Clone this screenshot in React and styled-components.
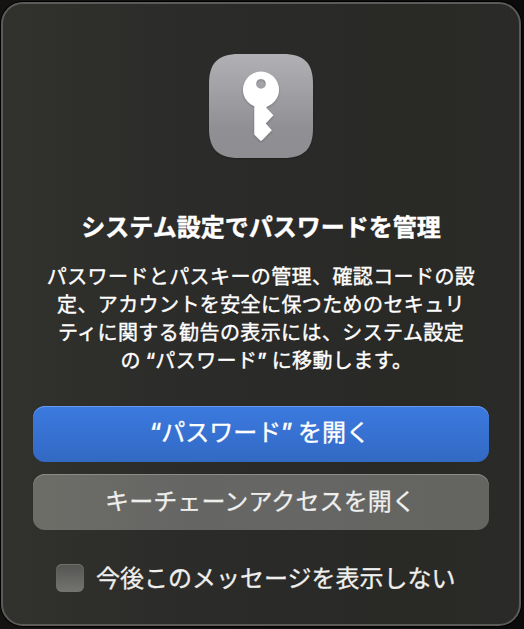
import React from "react";
import styled, { createGlobalStyle, css } from "styled-components";

const GlobalStyle = createGlobalStyle`
  html, body { margin: 0; background: #0d0b0a; overflow: hidden; }
  * { box-sizing: border-box; }
`;

const Desktop = styled.div`
  width: 524px;
  height: 629px;
  padding: 2px 3px 3px 1px;
  background: linear-gradient(90deg, #141312 0, #100e0d 50%, #0b0b0b 100%);
`;

const Dialog = styled.main`
  width: 520px;
  height: 624px;
  padding: 50px 30px 0;
  border: 2px solid #5b5b59;
  border-radius: 22px;
  box-shadow: 0 0 0 1px #000;
  background: linear-gradient(90deg, #31312d 0, #2c2c2a 30%, #2a2a29 50%, #292926 78%, #2a2a28 100%);
  display: flex;
  flex-direction: column;
  align-items: center;
  font-family: "Noto Sans CJK JP", sans-serif;
  color: #fff;
`;

const AppIcon = styled.svg`
  display: block;
  flex: none;
  width: 112px;
  height: 112px;
  margin: -4px 0 0;
`;

const Title = styled.h1`
  margin: 48px 0 0;
  height: 32px;
  font-size: 24px;
  line-height: 32px;
  font-weight: 700;
  white-space: nowrap;
  -webkit-text-stroke: 0.4px #fff;
`;

const Message = styled.p`
  margin: 20px 0 0;
  display: flex;
  flex-direction: column;
  align-items: center;
  font-size: 20px;
  line-height: 28px;
  letter-spacing: 0.4px;
  font-weight: 400;
  -webkit-text-stroke: 0.4px #fff;
`;

const Line = styled.span`
  height: 28px;
  white-space: pre;
  padding-left: ${(p) => p.$indent || 0}px;
`;

const Quote = styled.span`
  font-family: Inter, sans-serif;
  font-weight: 500;
  letter-spacing: 0;
`;

const Actions = styled.div`
  width: 456px;
  margin-top: 32px;
  display: flex;
  flex-direction: column;
  gap: 12px;
`;

const Button = styled.button`
  height: 56px;
  padding: 0 0 5px;
  border: 0;
  border-radius: 12px;
  font: 400 24px/32px "Noto Sans CJK JP", sans-serif;
  white-space: pre;
  ${(p) =>
    p.$primary
      ? css`
          color: #fff;
          background: linear-gradient(#3c7ae0, #3269c3);
          box-shadow: inset 0 1px 0 #669aeb;
          -webkit-text-stroke: 0.35px #fff;
          padding-right: 2px;
        `
      : css`
          color: #efefed;
          background: linear-gradient(90deg, #6d6d68, #656564 35%, #666665 55%, #646460);
          box-shadow: inset 0 1px 0 #8b8b88;
          -webkit-text-stroke: 0.25px #efefed;
          letter-spacing: 0.1px;
          padding-right: 1px;
        `}
`;

const Option = styled.label`
  align-self: flex-start;
  margin: 32px 0 0 23px;
  display: flex;
  align-items: center;
  gap: 12px;
  height: 32px;
  font-size: 24px;
  line-height: 32px;
  white-space: nowrap;
  color: #efefed;
  -webkit-text-stroke: 0.3px #efefed;
`;

const OptionText = styled.span`
  margin-top: -2px;
`;

const Checkbox = styled.input`
  appearance: none;
  width: 28px;
  height: 28px;
  margin: 0;
  border-radius: 6px;
  background: linear-gradient(#545452, #747471);
  box-shadow: inset 0 1px 0 #70706e, inset 0 0 1px #777;
`;

function KeyIcon() {
  return (
    <AppIcon viewBox="-4 -4 112 112" aria-hidden="true">
      <defs>
        <linearGradient id="tile" x2="0" y2="1">
          <stop stopColor="#b1b0b5" />
          <stop offset=".72" stopColor="#908f94" />
          <stop offset="1" stopColor="#8e8d92" />
        </linearGradient>
        <filter id="shade" x="-20%" y="-20%" width="140%" height="140%">
          <feDropShadow dx="0" dy="1" stdDeviation="1" floodOpacity=".25" />
        </filter>
      </defs>
      <path
        filter="url(#shade)"
        fill="url(#tile)"
        d="M30 0H74C95 0 104 9 104 30V74C104 95 95 104 74 104H30C9 104 0 95 0 74V30C0 9 9 0 30 0Z"
      />
      <path
        filter="url(#shade)"
        fill="#fff"
        fillRule="evenodd"
        d="M45.3 52.3A18 18 0 1 1 58.7 52.3L57 53.4L64.4 61.3L56.7 69.4L62.8 76.2L53 86.2Q52 87.3 51 86.2L45.3 80.4ZM52 24.9A4.9 4.9 0 1 0 52 34.7A4.9 4.9 0 1 0 52 24.9Z"
      />
    </AppIcon>
  );
}

export default function App() {
  return (
    <>
      <GlobalStyle />
      <Desktop>
        <Dialog>
          <KeyIcon />
          <Title>システム設定でパスワードを管理</Title>
          <Message>
            <Line>パスワードとパスキーの管理、確認コードの設</Line>
            <Line>定、アカウントを安全に保つためのセキュリ</Line>
            <Line>ティに関する勧告の表示には、システム設定</Line>
            <Line $indent={11}>
              の <Quote>“</Quote>パスワード<Quote>”</Quote> に移動します。
            </Line>
          </Message>
          <Actions>
            <Button $primary>
              <Quote>“</Quote>パスワード<Quote>”</Quote> を開く
            </Button>
            <Button>キーチェーンアクセスを開く</Button>
          </Actions>
          <Option>
            <Checkbox type="checkbox" />
            <OptionText>今後このメッセージを表示しない</OptionText>
          </Option>
        </Dialog>
      </Desktop>
    </>
  );
}
